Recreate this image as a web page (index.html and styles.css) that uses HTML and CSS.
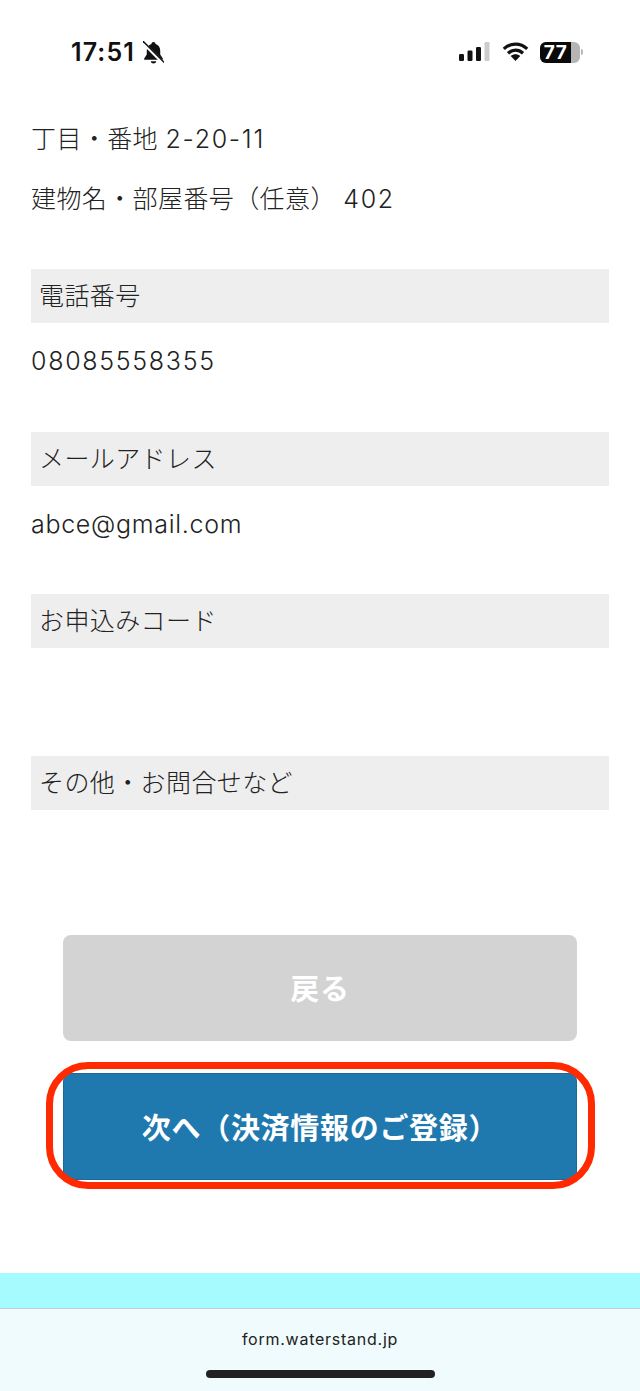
FILE: index.html
```html
<!DOCTYPE html>
<html lang="ja">
<head>
  <meta charset="UTF-8">
  <meta name="viewport" content="width=device-width, initial-scale=1.0">
  <title>お申込み内容の確認</title>
  <link rel="stylesheet" href="styles.css">
</head>
<body>
  <header class="status-bar">
    <div class="status-left">
      <span class="clock">17:51</span>
      <svg class="bell" width="21" height="23" viewBox="3 1.500 18 20.500">
        <path d="M12 2.500c1 0 1.700.7 1.800 1.600 2.800.8 4.200 3.200 4.200 6v3.400l2.300 3.700c.3.600 0 1.100-.6 1.100H4.300c-.6 0-.9-.5-.6-1.100L6 13.500v-3.400c0-2.800 1.400-5.200 4.200-6 .1-.9.800-1.600 1.800-1.600z" fill="#111"/>
        <path d="M9.500 19.500h5c-.3 1.300-1.200 2-2.500 2s-2.200-.7-2.500-2z" fill="#111"/>
        <path d="M2.500 3l19 19" stroke="#fff" stroke-width="2.800"/>
        <path d="M2.500 1.500l20 20" stroke="#111" stroke-width="1.300"/>
      </svg>
    </div>
    <div class="status-right">
      <svg width="31" height="20" viewBox="0 0 31 20">
        <rect x="0" y="12" width="5" height="7" rx="1.200" fill="#111"/>
        <rect x="8.500" y="8.500" width="5" height="10.500" rx="1.200" fill="#111"/>
        <rect x="17" y="5" width="5" height="14" rx="1.200" fill="#111"/>
        <rect x="25.500" y="0" width="5" height="19" rx="1.200" fill="#ccc"/>
      </svg>
      <svg width="27" height="20" viewBox="0 0 27 20">
        <path d="M1.800 6.800C8.500.5 18.500.5 25.200 6.800" fill="none" stroke="#111" stroke-width="3.200"/>
        <path d="M6 11.200c4.400-4 10.600-4 15 0" fill="none" stroke="#111" stroke-width="3.200"/>
        <path d="M13.500 19l-4.800-5c2.800-2.200 6.800-2.200 9.600 0z" fill="#111"/>
      </svg>
      <div class="battery">
        <div class="battery-body">
          <div class="battery-fill"></div>
          <span class="battery-level">77</span>
        </div>
        <div class="battery-cap"></div>
      </div>
    </div>
  </header>

  <main class="content">
    <p class="line">丁目・番地 <span class="num">2-20-11</span></p>
    <p class="line">建物名・部屋番号（任意） <span class="num">402</span></p>

    <section class="first-section">
      <h3 class="label">電話番号</h3>
      <p class="value"><span class="num">08085558355</span></p>
    </section>
    <section>
      <h3 class="label">メールアドレス</h3>
      <p class="value email">abce@gmail.com</p>
    </section>
    <section>
      <h3 class="label">お申込みコード</h3>
      <p class="value"></p>
    </section>
    <section>
      <h3 class="label">その他・お問合せなど</h3>
    </section>

    <div class="actions">
      <button class="btn btn-back">戻る</button>
      <div class="next-wrap">
        <button class="btn btn-next">次へ（決済情報のご登録）</button>
        <div class="highlight"></div>
      </div>
    </div>
  </main>

  <div class="page-end"></div>
  <footer class="url-bar">
    <span class="url">form.waterstand.jp</span>
    <div class="home-bar"></div>
  </footer>
</body>
</html>
```

FILE: styles.css
```css
* {
  box-sizing: border-box;
}
html, body {
  margin: 0;
  padding: 0;
}
body {
  width: 640px;
  height: 1391px;
  overflow: hidden;
  background: #fff;
  color: #222;
  font-family: Inter, "Noto Sans CJK JP", sans-serif;
  font-weight: 300;
  letter-spacing: 0.4px;
  display: flex;
  flex-direction: column;
}
.status-bar {
  height: 109px;
  flex: none;
  display: flex;
  justify-content: space-between;
  align-items: flex-start;
  padding: 38px 57px 0 71px;
}
.status-left, .status-right {
  display: flex;
  align-items: center;
}
.status-left {
  gap: 8px;
  height: 28px;
}
.clock {
  font-size: 25px;
  font-weight: 600;
  letter-spacing: 1.1px;
  color: #111;
  line-height: 28px;
}
.status-right {
  gap: 12px;
  height: 28px;
}
.battery {
  display: flex;
  align-items: center;
  gap: 1px;
  margin-left: -1px;
}
.battery-body {
  position: relative;
  width: 40px;
  height: 21px;
  border-radius: 6px;
  background: #b5b5b5;
  overflow: hidden;
}
.battery-fill {
  width: 77%;
  height: 100%;
  background: #0a0a0a;
}
.battery-level {
  position: absolute;
  top: 0;
  left: 0;
  width: 31px;
  text-align: center;
  font-size: 19px;
  font-weight: 700;
  line-height: 21px;
  color: #fff;
}
.battery-cap {
  width: 2px;
  height: 6px;
  border-radius: 0 2px 2px 0;
  background: #b5b5b5;
}
.content {
  flex: 1;
  padding: 0 31px;
}
.line {
  margin: 0;
  height: 60px;
  line-height: 60px;
  font-size: 25px;
}
.num {
  letter-spacing: 1.7px;
}
section {
  height: 162px;
}
.first-section {
  margin-top: 40px;
  height: 163px;
}
.label {
  margin: 0;
  height: 54px;
  line-height: 54px;
  padding-left: 8px;
  background: #eee;
  font-size: 25px;
  font-weight: 300;
}
.value {
  margin: 0;
  height: 76px;
  line-height: 76px;
  font-size: 25px;
}
.email {
  letter-spacing: 0.7px;
}
.actions {
  padding: 0 32px;
  margin-top: 17px;
  display: flex;
  flex-direction: column;
  gap: 32px;
}
.btn {
  display: block;
  width: 100%;
  border: 0;
  border-radius: 8px;
  padding: 0 0 2px;
  color: #fff;
  font-family: inherit;
  font-weight: 700;
  font-size: 29px;
  letter-spacing: 0.7px;
}
.btn-back {
  height: 106px;
  background: #d3d3d3;
}
.next-wrap {
  position: relative;
}
.btn-next {
  height: 107px;
  background: #2079ae;
  border: 1px solid #1a6a9e;
}
.highlight {
  position: absolute;
  top: -11px;
  left: -17px;
  right: -18px;
  bottom: -9px;
  border: 7px solid #ff2a00;
  border-radius: 42px;
}
.page-end {
  flex: none;
  height: 35px;
  background: #a6fbff;
}
.url-bar {
  flex: none;
  height: 83px;
  border-top: 1px solid #c2cfd2;
  background: #effbfc;
  display: flex;
  flex-direction: column;
  align-items: center;
}
.url {
  margin-top: 20px;
  font-weight: 400;
  font-size: 16px;
  line-height: 20px;
  letter-spacing: 0.75px;
  color: #222;
}
.home-bar {
  margin-top: 21px;
  width: 229px;
  height: 8px;
  border-radius: 4px;
  background: #222;
}
```
